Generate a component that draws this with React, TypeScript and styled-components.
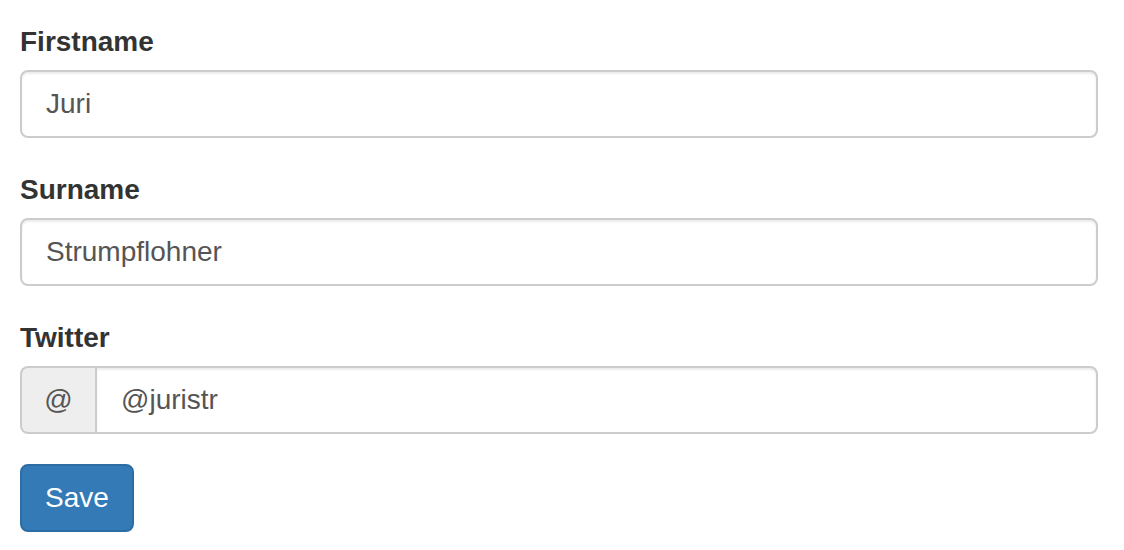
import React, { useState } from "react";
import styled, { createGlobalStyle } from "styled-components";

const GlobalStyle = createGlobalStyle`
  * { box-sizing: border-box; }
  body {
    margin: 0;
    background: #fff;
    font-family: "Liberation Sans", Arial, Helvetica, sans-serif;
    font-size: 28px;
    line-height: 1.42857;
    color: #333;
  }
`;

const Form = styled.form`
  padding: 20px 26px 0 20px;
`;

const FormGroup = styled.div`
  margin-bottom: 30px;
`;

const Label = styled.label`
  display: block;
  padding-top: 2px;
  margin-bottom: 8px;
  font-weight: 700;
  font-size: 28px;
  line-height: 40px;
  color: #333;
`;

const Input = styled.input<{ $grouped?: boolean }>`
  display: block;
  width: 100%;
  height: 68px;
  padding: 12px 24px;
  font-family: inherit;
  font-size: 28px;
  line-height: 40px;
  color: #555;
  background: #fff;
  border: 2px solid #ccc;
  border-radius: ${(p) => (p.$grouped ? "0 8px 8px 0" : "8px")};
  box-shadow: inset 0 2px 2px rgba(0, 0, 0, 0.075);
  outline: none;
  flex: 1;
`;

const InputGroup = styled.div`
  display: flex;
  width: 100%;
`;

const Addon = styled.span`
  display: flex;
  align-items: center;
  justify-content: center;
  width: 75px;
  font-size: 28px;
  line-height: 1;
  color: #555;
  background: #eee;
  border: 2px solid #ccc;
  border-right: 0;
  border-radius: 8px 0 0 8px;
`;

const Button = styled.button`
  display: block;
  height: 68px;
  padding: 12px 23px;
  font-family: inherit;
  font-size: 28px;
  line-height: 40px;
  color: #fff;
  background: #337ab7;
  border: 2px solid #2e6da4;
  border-radius: 8px;
  cursor: pointer;
`;

export default function App() {
  const [firstname, setFirstname] = useState("Juri");
  const [surname, setSurname] = useState("Strumpflohner");
  const [twitter, setTwitter] = useState("@juristr");

  return (
    <>
      <GlobalStyle />
      <Form onSubmit={(e) => e.preventDefault()}>
        <FormGroup>
          <Label htmlFor="firstname">Firstname</Label>
          <Input id="firstname" value={firstname} onChange={(e) => setFirstname(e.target.value)} />
        </FormGroup>
        <FormGroup>
          <Label htmlFor="surname">Surname</Label>
          <Input id="surname" value={surname} onChange={(e) => setSurname(e.target.value)} />
        </FormGroup>
        <FormGroup>
          <Label htmlFor="twitter">Twitter</Label>
          <InputGroup>
            <Addon>@</Addon>
            <Input $grouped id="twitter" value={twitter} onChange={(e) => setTwitter(e.target.value)} />
          </InputGroup>
        </FormGroup>
        <Button type="submit">Save</Button>
      </Form>
    </>
  );
}
